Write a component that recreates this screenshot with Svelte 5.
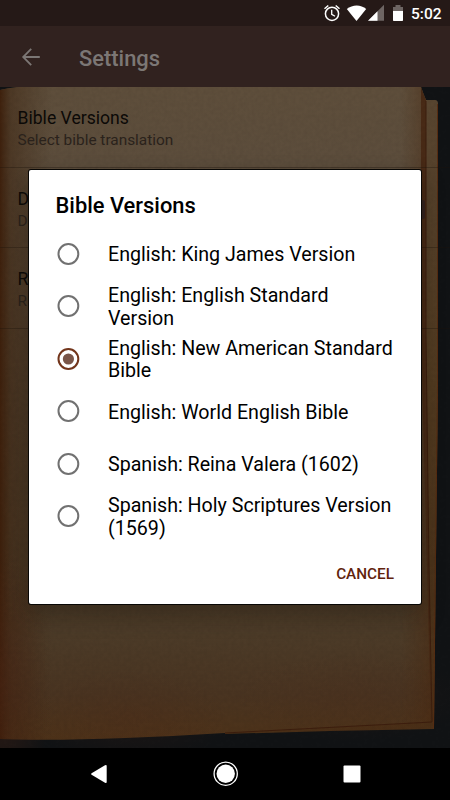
<script lang="ts">
	let selected = $state(2);

	const versions = [
		'English: King James Version',
		'English: English Standard Version',
		'English: New American Standard Bible',
		'English: World English Bible',
		'Spanish: Reina Valera (1602)',
		'Spanish: Holy Scriptures Version (1569)'
	];

	const preferences = [
		{ title: 'Bible Versions', summary: 'Select bible translation' },
		{ title: 'D', summary: 'D', toggle: true },
		{ title: 'R', summary: 'R' }
	];
</script>

<div class="screen">
	<header class="status-bar">
		<svg class="status-icons" width="90" height="26" viewBox="0 0 90 26" fill="#fff">
			<g fill="none" stroke="#fff">
				<circle cx="17" cy="13.8" r="6.6" stroke-width="1.5" />
				<path d="M9.5 8.7l3.8-3.2M24.5 8.7l-3.8-3.2" stroke-width="1.5" />
				<path d="M16.7 9.8v4.5l3.3 2" stroke-width="1.3" />
			</g>
			<path d="M31.8 8.9C37.5 4.2 46 4.2 51.2 8.9L41.5 21z" />
			<path d="M69 4.8V20.8H53z" fill="#6d6563" />
			<path d="M62.5 11.3V20.8H53z" />
			<path d="M78 7h2.5V5h5v2H88v4H78z" fill="#6d6563" />
			<path d="M78 11h10v9.3q0 .7-.7.7h-8.6q-.7 0-.7-.7z" />
		</svg>
		<span class="clock">5:02</span>
	</header>

	<div class="app-bar">
		<svg width="20" height="20" viewBox="0 0 20 20" fill="none" stroke="#7c7775" stroke-width="1.8">
			<path d="M18.8 10H2.5M10.2 1.9L2.2 10l8 8.1" />
		</svg>
		<h1>Settings</h1>
	</div>

	<main class="content">
		<svg class="backdrop" width="450" height="661" viewBox="0 0 450 661">
			<defs>
				<linearGradient id="paper" x1="0" y1="0" x2="0" y2="1">
					<stop offset="0" stop-color="#5e4e3b" />
					<stop offset="0.12" stop-color="#5c4d3c" />
					<stop offset="0.5" stop-color="#4f3f2e" />
					<stop offset="0.84" stop-color="#4c3b28" />
					<stop offset="0.93" stop-color="#493421" />
					<stop offset="1" stop-color="#4d3219" />
				</linearGradient>
				<linearGradient id="fold" x1="0" y1="0" x2="1" y2="0">
					<stop offset="0" stop-color="#3b1c08" stop-opacity="0.9" />
					<stop offset="0.025" stop-color="#3d2410" stop-opacity="0.5" />
					<stop offset="0.12" stop-color="#3d2814" stop-opacity="0" />
					<stop offset="0.93" stop-color="#4a2c14" stop-opacity="0" />
					<stop offset="1" stop-color="#4a280f" stop-opacity="0.5" />
				</linearGradient>
				<linearGradient id="edge" x1="0" y1="0" x2="0" y2="1">
					<stop offset="0" stop-color="#584530" />
					<stop offset="0.45" stop-color="#523b21" />
					<stop offset="1" stop-color="#4a2f17" />
				</linearGradient>
				<radialGradient id="stain">
					<stop offset="0" stop-color="#4a2415" stop-opacity="0.5" />
					<stop offset="1" stop-color="#4a2415" stop-opacity="0" />
				</radialGradient>
				<filter id="grain" x="0" y="0" width="100%" height="100%">
					<feTurbulence type="fractalNoise" baseFrequency="0.25" numOctaves="3" seed="4" />
					<feColorMatrix values="0 0 0 0 0  0 0 0 0 0  0 0 0 0 0  0.9 0 0 0 -0.3" />
				</filter>
			</defs>
			<rect width="450" height="661" fill="#111315" />
			<path d="M424 13H435Q438 13 438 17V300L434 642L330 644L225 647V13z" fill="url(#edge)" />
			<path d="M437.5 17V300L433.5 641" fill="none" stroke="#582d12" />
			<path d="M0 3Q8 1 18 0H421Q423 6 426 13V250L429 480L431 635L225 646Q80 655 0 652z" fill="url(#paper)" />
			<path d="M0 3Q8 1 18 0H421Q423 6 426 13V250L429 480L431 635L225 646Q80 655 0 652z" fill="url(#fold)" />
			<path d="M421 0Q423 6 426 13V250L429 480L431 635L427 480L421 250z" fill="#482a16" />
			<path d="M426 14V250L429 480L432 635L225 646" fill="none" stroke="#3c1e0e" />
			<ellipse cx="130" cy="630" rx="100" ry="48" fill="url(#stain)" opacity="0.4" />
			<ellipse cx="350" cy="610" rx="120" ry="45" fill="url(#stain)" opacity="0.3" />
			<ellipse cx="0" cy="600" rx="50" ry="140" fill="url(#stain)" />
			<rect width="450" height="661" filter="url(#grain)" opacity="0.09" />
		</svg>

		<ul class="preferences">
			{#each preferences as pref}
				<li>
					<div>
						<div class="pref-title">{pref.title}</div>
						<div class="pref-summary">{pref.summary}</div>
					</div>
					{#if pref.toggle}
						<span class="toggle"></span>
					{/if}
				</li>
			{/each}
		</ul>

		<div class="dialog" role="dialog" aria-label="Bible Versions">
			<h2>Bible Versions</h2>
			<div class="options" role="radiogroup">
				{#each versions as version, i}
					<button
						class="option"
						class:checked={selected === i}
						role="radio"
						aria-checked={selected === i}
						onclick={() => (selected = i)}
					>
						<svg class="radio" width="23" height="23" viewBox="0 0 23 23">
							<circle class="ring" cx="11.4" cy="11" r="9.9" />
							{#if selected === i}
								<circle class="dot" cx="11.4" cy="11" r="5.6" />
							{/if}
						</svg>
						<span class="label">{version}</span>
					</button>
				{/each}
			</div>
			<div class="actions">
				<button class="cancel">CANCEL</button>
			</div>
		</div>
	</main>

	<nav class="nav-bar">
		<svg width="18" height="20" viewBox="0 0 18 20" fill="#fff">
			<path d="M1.6 9.2L15 1.2Q16.7.5 16.7 2V18Q16.7 19.5 15 18.7L1.6 10.8Q.4 10 1.6 9.2z" />
		</svg>
		<svg width="26" height="26" viewBox="0 0 26 26" fill="#fff">
			<circle cx="12.7" cy="12.7" r="9.2" />
			<circle cx="12.7" cy="12.7" r="11.6" fill="none" stroke="#fff" stroke-width="1.3" />
		</svg>
		<svg width="18" height="18" viewBox="0 0 18 18" fill="#fff">
			<rect x="0.5" y="0.5" width="17" height="17" rx="1" />
		</svg>
	</nav>
</div>

<style>
	:global(body) {
		margin: 0;
		background: #000;
	}

	.screen {
		width: 450px;
		height: 800px;
		display: flex;
		flex-direction: column;
		overflow: hidden;
		font-family: Roboto, 'Liberation Sans', sans-serif;
	}

	button {
		font: inherit;
		background: none;
		border: 0;
		padding: 0;
		margin: 0;
		cursor: pointer;
	}

	svg {
		display: block;
		flex: none;
	}

	.status-bar {
		height: 26px;
		box-sizing: border-box;
		padding-right: 9px;
		display: flex;
		align-items: center;
		justify-content: flex-end;
		gap: 6px;
		background: #251917;
	}

	.clock {
		width: 30px;
		color: #fff;
		font-size: 15.5px;
		font-weight: 500;
		line-height: 26px;
		padding-top: 2px;
		white-space: nowrap;
	}

	.app-bar {
		height: 61px;
		box-sizing: border-box;
		padding: 0 21px;
		display: flex;
		align-items: center;
		gap: 38px;
		background: #31221f;
	}

	h1 {
		margin: 4px 0 0;
		color: #7c7775;
		font-size: 21.9px;
		font-weight: 500;
		line-height: 26px;
	}

	.content {
		position: relative;
		height: 661px;
	}

	.backdrop {
		position: absolute;
		inset: 0;
	}

	.preferences {
		position: relative;
		margin: 0;
		padding: 0;
		list-style: none;
	}

	.preferences li {
		height: 80.5px;
		box-sizing: border-box;
		padding: 5px 25px 0 17.5px;
		display: flex;
		align-items: center;
		justify-content: space-between;
		border-bottom: 1px solid rgba(30, 20, 12, 0.35);
	}

	.pref-title {
		color: #0b0907;
		font-size: 17.6px;
		line-height: 22px;
	}

	.pref-summary {
		color: #2a221b;
		font-size: 15.4px;
		line-height: 22px;
	}

	.toggle {
		width: 40px;
		height: 19px;
		border-radius: 2px;
		background: #33221e;
	}

	.dialog {
		position: absolute;
		left: 29px;
		top: 83px;
		width: 392px;
		height: 434px;
		box-sizing: border-box;
		padding-top: 22px;
		display: flex;
		flex-direction: column;
		border-radius: 2px;
		background: #fff;
		box-shadow: 0 0 0 1px #080705, 0 10px 22px 2px rgba(15, 12, 8, 0.3);
	}

	h2 {
		margin: 0 26.5px;
		color: #000;
		font-size: 21.9px;
		font-weight: 500;
		line-height: 27px;
	}

	.options {
		margin-top: 9px;
	}

	.option {
		width: 100%;
		height: 52.5px;
		padding: 0 26px 0 28px;
		display: flex;
		align-items: center;
		gap: 28px;
		color: #000;
		font-size: 19.65px;
		line-height: 22.5px;
		text-align: left;
	}

	.label {
		padding-top: 2.4px;
	}

	.ring {
		fill: none;
		stroke: #717171;
		stroke-width: 2;
	}

	.checked .ring {
		stroke: #72351b;
	}

	.dot {
		fill: #795548;
	}

	.actions {
		padding: 21px 27px 0;
		display: flex;
		justify-content: flex-end;
	}

	.cancel {
		color: #61230d;
		font-size: 15.3px;
		font-weight: 500;
		line-height: 20px;
	}

	.nav-bar {
		height: 52px;
		padding: 0 89px 0 90px;
		display: flex;
		align-items: center;
		justify-content: space-between;
		background: #000;
	}
</style>
